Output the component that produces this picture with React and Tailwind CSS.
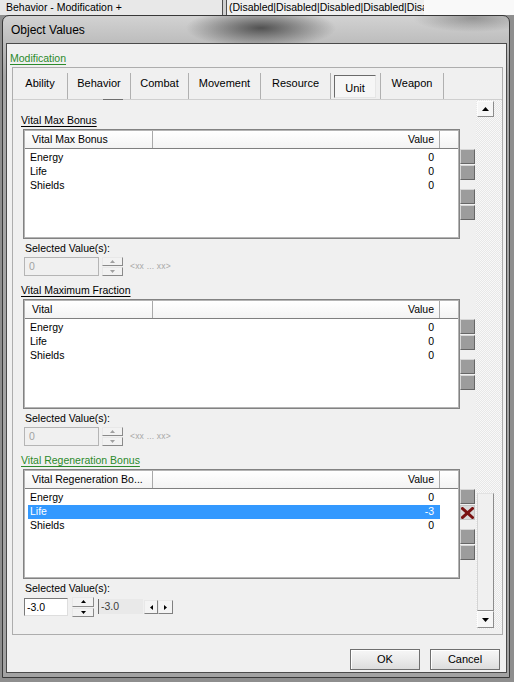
import React from 'react';

const Tri = ({ dir = 'up', color = '#000', w = 7, h = 4 }) => {
    const pts = {
        up: `0,${h} ${w},${h} ${w / 2},0`,
        down: `0,0 ${w},0 ${w / 2},${h}`,
        left: `${h},0 ${h},${w} 0,${w / 2}`,
        right: `0,0 0,${w} ${h},${w / 2}`,
    }[dir];
    const vw = dir === 'left' || dir === 'right' ? h : w;
    const vh = dir === 'left' || dir === 'right' ? w : h;
    return (
        <svg width={vw} height={vh} viewBox={`0 0 ${vw} ${vh}`}>
            <polygon points={pts} fill={color} />
        </svg>
    );
};

const GrayBtn = () => (
    <div className="w-[15px] h-[15px] bg-[#9c9c9c] border border-t-[#d6d6d6] border-l-[#d6d6d6] border-r-[#666666] border-b-[#666666]" />
);

const DeleteBtn = () => (
    <div className="w-[15px] h-[15px] bg-[#dadada] border border-[#c4c4c4] flex items-center justify-center">
        <svg width="13" height="12" viewBox="0 0 13 12">
            <path d="M1.5 1.5 L11.5 10.5 M11.5 1.5 L1.5 10.5" stroke="#7a1212" strokeWidth="3" strokeLinecap="square" />
        </svg>
    </div>
);

const SideButtons = ({ del }) => (
    <div className="flex flex-col pt-[20px] w-[15px]">
        <GrayBtn />
        <div className="mt-[1px]">{del ? <DeleteBtn /> : <GrayBtn />}</div>
        <div className="mt-[9px]"><GrayBtn /></div>
        <div className="mt-[1px]"><GrayBtn /></div>
    </div>
);

const ListBox = ({ header, rows, selected }) => (
    <div className="w-[437px] h-[110px] border border-[#828282] bg-white">
        <div className="h-full border border-[#b4b4b4]">
            {/* column headers */}
            <div className="flex h-[18px] border-b border-[#7f7f7f] bg-[linear-gradient(to_bottom,#ffffff,#f3f3f3)]">
                <div className="w-[128px] border-r border-[#a9a9a9] pl-[7px] flex items-center whitespace-nowrap">{header}</div>
                <div className="w-[287px] border-r border-[#a9a9a9] pr-[5px] flex items-center justify-end">Value</div>
                <div className="flex-1" />
            </div>
            <div className="pt-[2px] pl-[3px]">
                {rows.map((r) => (
                    <div
                        key={r.name}
                        className={`w-[412px] h-[14px] flex items-center justify-between pl-[2px] pr-[6px] ${selected === r.name ? 'bg-[#3399ff] text-white' : ''}`}
                    >
                        <span>{r.name}</span>
                        <span>{r.value}</span>
                    </div>
                ))}
            </div>
        </div>
    </div>
);

const Spinner = ({ disabled, tall }) => (
    <div className={`flex flex-col gap-[1px] ${tall ? 'w-[22px]' : 'w-[21px]'}`}>
        {['up', 'down'].map((d) => (
            <div
                key={d}
                className={`${tall ? 'h-[9.5px]' : 'h-[9px]'} bg-[#f2f2f2] border border-t-[#e8e8e8] border-l-[#e8e8e8] border-r-[#8a8a8a] border-b-[#8a8a8a] flex items-center justify-center`}
            >
                <Tri dir={d} w={5} h={3} color={disabled ? '#a0a0a0' : '#000'} />
            </div>
        ))}
    </div>
);

const Section = ({ title, green, header, rows, selected, del, children }) => (
    <div className="flex flex-col">
        <div className={`h-[14px] leading-[14px] underline underline-offset-[2px] ${green ? 'text-[#2b8a2b]' : 'text-black'}`}>{title}</div>
        <div className="flex mt-[2px] ml-[2px]">
            <ListBox header={header} rows={rows} selected={selected} />
            <SideButtons del={del} />
        </div>
        <div className="ml-[4px] mt-[3px] h-[13px] leading-[13px]">Selected Value(s):</div>
        <div className="mt-[2px] h-[19px] ml-[3px] flex items-start">{children}</div>
        <div className="h-[7px]" />
    </div>
);

const DisabledInput = () => (
    <>
        <div className="w-[75px] h-[19px] bg-[#f0f0f0] border border-[#b5b5b5] text-[#a3a3a3] pl-[4px] leading-[17px]">0</div>
        <div className="ml-[3px]"><Spinner disabled /></div>
        <div className="ml-[7px] self-center text-[8.5px] text-[#a8a8a8] tracking-[0.2px]">&lt;xx ... xx&gt;</div>
    </>
);

const vitals = [
    { name: 'Energy', value: '0' },
    { name: 'Life', value: '0' },
    { name: 'Shields', value: '0' },
];

const regen = [
    { name: 'Energy', value: '0' },
    { name: 'Life', value: '-3' },
    { name: 'Shields', value: '0' },
];

const tabs = [
    { label: 'Ability', w: 'w-[54px]' },
    { label: 'Behavior', w: 'w-[62px]' },
    { label: 'Combat', w: 'w-[57px]' },
    { label: 'Movement', w: 'w-[71px]' },
    { label: 'Resource', w: 'w-[69px]' },
    { label: 'Unit', w: 'w-[49px]', active: true },
    { label: 'Weapon', w: 'w-[62px]' },
];

const App = () => {
    return (
        <div className="w-[514px] h-[682px] overflow-hidden bg-[#8e8e8e] flex flex-col font-['Liberation_Sans',Arial,sans-serif] text-[10.5px] text-black">
            {/* strip of the editor behind the dialog */}
            <div className="h-[15px] flex leading-[14px] whitespace-nowrap">
                <div className="w-[222px] bg-[#e8e8e8] pl-[6px]">Behavior - Modification +</div>
                <div className="w-[5px] border-x border-[#505050] bg-[#d0d0d0]" />
                <div className="w-[197px] bg-[#efefef] pl-[2px] overflow-hidden">(Disabled|Disabled|Disabled|Disabled|Disabled</div>
                <div className="flex-1 bg-[#f9f9f9]" />
            </div>

            {/* dialog window */}
            <div className="ml-[2px] mr-[4px] h-[663px] flex flex-col border border-[#383838] rounded-t-[7px] pl-[3px] pr-[2px] pb-[4px] bg-[radial-gradient(ellipse_75px_20px_at_258px_12px,rgba(60,60,60,0.85),transparent),radial-gradient(ellipse_60px_14px_at_470px_2px,rgba(90,90,90,0.5),transparent),linear-gradient(to_bottom,#d2d2d2,#bcbcbc_28px,#a6a6a6_60px,#a2a2a2)]">
                <div className="h-[27px] flex items-center pl-[5px] text-[12px] text-black">Object Values</div>

                <div className="flex-1 border border-[#4a4a4a] bg-[#f0f0f0] flex flex-col">
                    <div className="pt-[7px] pl-[3px] h-[21px] leading-[14px]">
                        <span className="text-[#2b8a2b] underline underline-offset-[2px]">Modification</span>
                    </div>

                    {/* tab control */}
                    <div className="mt-[2px] ml-[5px] mr-[3px] h-[568px] border border-[#adadad] flex flex-col">
                        <div className="h-[31px] flex text-[11px]">
                            {tabs.map((t) => (
                                <React.Fragment key={t.label}>
                                    <div className={`${t.w} h-full flex items-center ${t.active ? 'pl-[3px]' : 'justify-center'}`}>
                                        {t.active ? (
                                            <div className="w-[42px] h-[23px] mt-[7px] mb-auto border border-t-[#6a6a6a] border-l-[#6a6a6a] border-r-[#e6e6e6] border-b-[#e6e6e6] bg-[#f6f6f6] flex items-center justify-center pt-[3px]">
                                                {t.label}
                                            </div>
                                        ) : (
                                            t.label
                                        )}
                                    </div>
                                    <div className="w-px h-[26px] self-end bg-[#b0b0b0]" />
                                </React.Fragment>
                            ))}
                        </div>
                        <div className="h-px bg-[#cfcfcf] flex">
                            <div className="ml-[90px] w-[20px] h-px bg-[#6e6e6e]" />
                        </div>

                        <div className="h-[529px] flex">
                            <div className="flex-1 overflow-hidden pt-[13px] pl-[8px]">
                                <Section title="Vital Max Bonus" header="Vital Max Bonus" rows={vitals}>
                                    <DisabledInput />
                                </Section>
                                <Section title="Vital Maximum Fraction" header="Vital" rows={vitals}>
                                    <DisabledInput />
                                </Section>
                                <Section title="Vital Regeneration Bonus" green header="Vital Regeneration Bo..." rows={regen} selected="Life" del>
                                    <div className="mt-[1px] w-[44px] h-[18px] bg-white border border-t-[#7a7a7a] border-l-[#7a7a7a] border-r-[#dedede] border-b-[#dedede] pl-[2px] leading-[16px]">-3.0</div>
                                    <div className="ml-[4px]"><Spinner tall /></div>
                                    <div className="ml-[4px] mt-[2px] w-[45px] h-[15px] bg-[#e9e9e9] border-l border-[#6d6d6d] pl-[2px] leading-[15px] text-[#3c3c3c]">-3.0</div>
                                    <div className="ml-[1px] mt-[3px] flex">
                                        <div className="w-[14px] h-[14px] bg-[#f4f4f4] border border-t-[#e8e8e8] border-l-[#e8e8e8] border-r-[#808080] border-b-[#808080] flex items-center justify-center">
                                            <Tri dir="left" w={5} h={3} />
                                        </div>
                                        <div className="w-[15px] h-[14px] bg-[#f4f4f4] border border-t-[#e8e8e8] border-l-[#e8e8e8] border-r-[#808080] border-b-[#808080] flex items-center justify-center">
                                            <Tri dir="right" w={5} h={3} />
                                        </div>
                                    </div>
                                </Section>
                            </div>

                            {/* vertical scrollbar */}
                            <div className="w-[26px] flex flex-col pt-[1px] pb-[1px] pl-[1px] bg-[repeating-conic-gradient(#e7e7e7_0_25%,#f8f8f8_0_50%)] bg-[length:2px_2px]">
                                <div className="w-[17px] h-[16px] bg-[#f6f6f6] border border-t-[#fdfdfd] border-l-[#fdfdfd] border-r-[#8c8c8c] border-b-[#8c8c8c] flex items-center justify-center">
                                    <Tri dir="up" />
                                </div>
                                <div className="flex-1" />
                                <div className="w-[17px] h-[118px] bg-[#f0f0f0] border border-t-[#e2e2e2] border-l-[#d4d4d4] border-r-[#8c8c8c] border-b-[#8c8c8c]" />
                                <div className="w-[17px] h-[17px] bg-[#f6f6f6] border border-t-[#fdfdfd] border-l-[#fdfdfd] border-r-[#8c8c8c] border-b-[#8c8c8c] flex items-center justify-center">
                                    <Tri dir="down" />
                                </div>
                            </div>
                        </div>
                    </div>

                    {/* dialog buttons */}
                    <div className="mt-[14px] flex justify-end gap-[10px] pr-[6px] text-[11px]">
                        <button className="w-[70px] h-[21px] border border-[#6f6f6f] bg-[linear-gradient(to_bottom,#f7f7f7,#ebebeb_50%,#dddddd)] shadow-[inset_1px_1px_0_#ffffff]">OK</button>
                        <button className="w-[70px] h-[21px] border border-[#6f6f6f] bg-[linear-gradient(to_bottom,#f7f7f7,#ebebeb_50%,#dddddd)] shadow-[inset_1px_1px_0_#ffffff]">Cancel</button>
                    </div>
                </div>
            </div>
        </div>
    );
};

export default App;
